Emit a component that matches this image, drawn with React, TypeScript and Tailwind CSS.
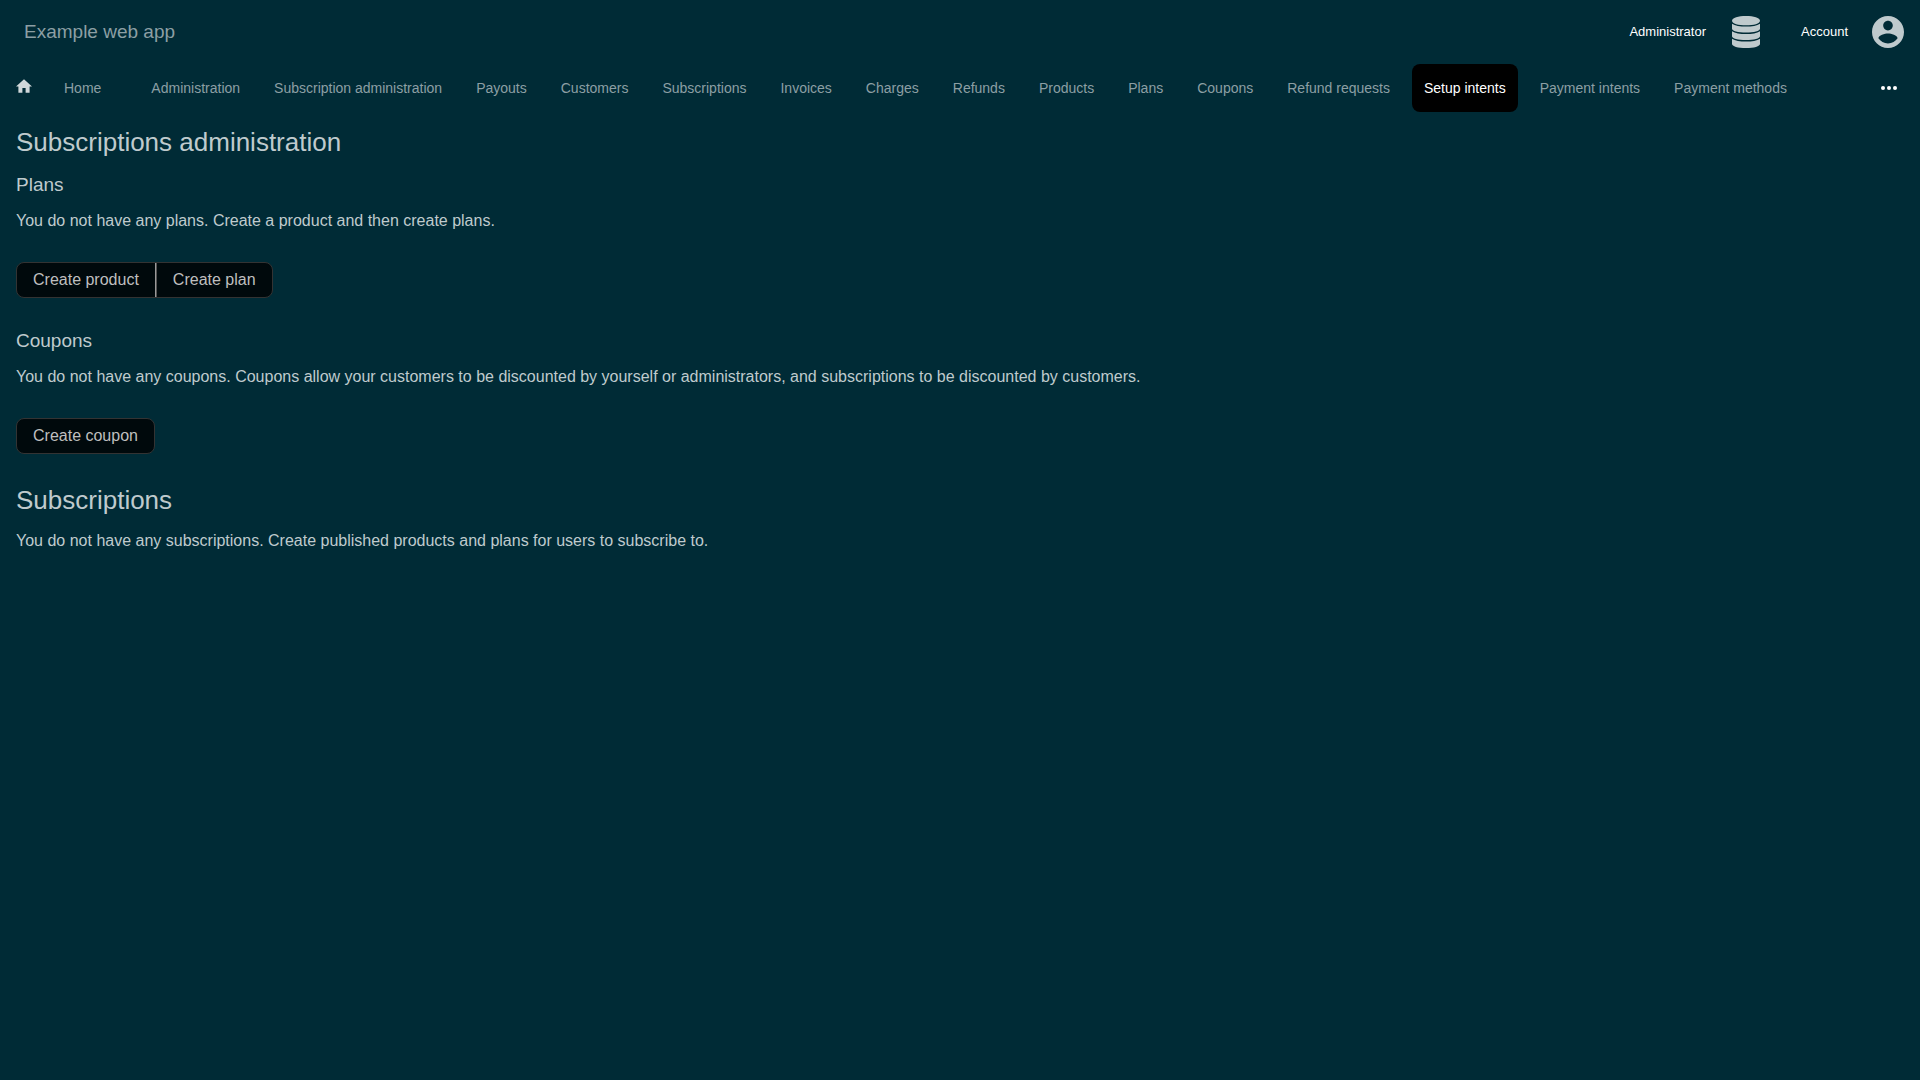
import React from "react";

const navItems = [
  "Administration",
  "Subscription administration",
  "Payouts",
  "Customers",
  "Subscriptions",
  "Invoices",
  "Charges",
  "Refunds",
  "Products",
  "Plans",
  "Coupons",
  "Refund requests",
  "Setup intents",
  "Payment intents",
  "Payment methods",
];

function DatabaseIcon() {
  return (
    <svg viewBox="0 0 28 32" className="h-8 w-7" fill="currentColor" aria-hidden="true">
      <path d="M14 0C6.3 0 0 1.8 0 4.7s6.3 4.6 14 4.6 14-1.700 14-4.600S21.700 0 14 0z" />
      <path d="M0 7.700c3 2 8 2.900 14 2.900s11-.900 14-2.900v5c0 2.100-6 3.900-14 3.900S0 14.800 0 12.700z" />
      <path d="M0 15.200c3 2 8 2.900 14 2.900s11-.900 14-2.900v5c0 2.100-6 3.900-14 3.900S0 22.300 0 20.200z" />
      <path d="M0 22.700c3 2 8 2.900 14 2.900s11-.900 14-2.900v5.200c0 2.300-6 4.100-14 4.100S0 30.200 0 27.900z" />
    </svg>
  );
}

function AccountIcon() {
  return (
    <svg viewBox="2 2 20 20" className="size-8" fill="currentColor" aria-hidden="true">
      <path d="M12 2C6.48 2 2 6.48 2 12s4.48 10 10 10 10-4.48 10-10S17.52 2 12 2zm0 3c1.66 0 3 1.34 3 3s-1.34 3-3 3-3-1.34-3-3 1.34-3 3-3zm0 14.2c-2.5 0-4.71-1.28-6-3.22.03-1.99 4-3.08 6-3.08 1.99 0 5.97 1.09 6 3.08-1.29 1.94-3.5 3.22-6 3.22z" />
    </svg>
  );
}

function HomeIcon() {
  return (
    <svg viewBox="2 3 20 17" className="h-[14px] w-4" fill="currentColor" aria-hidden="true">
      <path d="M10 20v-6h4v6h5v-8h3L12 3 2 12h3v8z" />
    </svg>
  );
}

function MoreIcon() {
  return (
    <svg viewBox="0 0 16 4" className="h-1 w-4" fill="currentColor" aria-hidden="true">
      <circle cx="2" cy="2" r="2" />
      <circle cx="8" cy="2" r="2" />
      <circle cx="14" cy="2" r="2" />
    </svg>
  );
}

export default function App() {
  return (
    <div className="min-h-screen bg-[#002b36] font-['Liberation_Sans',Arial,sans-serif] text-base text-[#bfcacd]">
      <header className="flex h-16 items-center px-4">
        <a href="#" className="px-2 text-[19px] text-[#8c9fa4]">
          Example web app
        </a>
        <div className="ml-auto flex items-center gap-[41px]">
          <button type="button" className="flex items-center gap-[26px] text-[13px]">
            <span className="text-white">Administrator</span>
            <DatabaseIcon />
          </button>
          <button type="button" className="flex items-center gap-6 text-[13px]">
            <span className="text-white">Account</span>
            <AccountIcon />
          </button>
        </div>
      </header>

      <nav className="flex h-12 items-center pl-4 pr-[23px] text-sm text-[#8c9fa4]">
        <a href="#" aria-label="Home" className="pb-1 text-[#d0d8da]">
          <HomeIcon />
        </a>
        <a href="#" className="ml-5 mr-[26px] px-3">
          Home
        </a>
        <ul className="flex gap-2.5">
          {navItems.map((item) => (
            <li key={item}>
              <a
                href="#"
                className={
                  item === "Setup intents"
                    ? "flex h-12 items-center whitespace-nowrap rounded-lg bg-black px-3 text-white"
                    : "flex h-12 items-center whitespace-nowrap px-3"
                }
              >
                {item}
              </a>
            </li>
          ))}
        </ul>
        <button type="button" aria-label="More" className="ml-auto text-white">
          <MoreIcon />
        </button>
      </nav>

      <main className="px-4 pt-[15px]">
        <section>
          <h1 className="text-[26px] leading-[30px]">Subscriptions administration</h1>
          <h2 className="mt-4 text-[19px] leading-6">Plans</h2>
          <p className="mt-3 leading-6">You do not have any plans. Create a product and then create plans.</p>
          <div className="mt-[29px] flex h-9 w-fit overflow-hidden rounded-lg border border-[#333] bg-[#00090c] text-[#bfbfbf]">
            <button type="button" className="border-r border-[#999] px-4">
              Create product
            </button>
            <button type="button" className="border-l border-[#555] px-4">
              Create plan
            </button>
          </div>
          <h2 className="mt-[31px] text-[19px] leading-6">Coupons</h2>
          <p className="mt-3 leading-6">
            You do not have any coupons. Coupons allow your customers to be discounted by yourself or administrators, and
            subscriptions to be discounted by customers.
          </p>
          <div className="mt-[29px] flex h-9 w-fit overflow-hidden rounded-lg border border-[#333] bg-[#00090c] text-[#bfbfbf]">
            <button type="button" className="px-4">
              Create coupon
            </button>
          </div>
        </section>
        <section className="mt-[31px]">
          <h1 className="text-[26px] leading-[30px]">Subscriptions</h1>
          <p className="mt-[14px] leading-6">
            You do not have any subscriptions. Create published products and plans for users to subscribe to.
          </p>
        </section>
      </main>
    </div>
  );
}
